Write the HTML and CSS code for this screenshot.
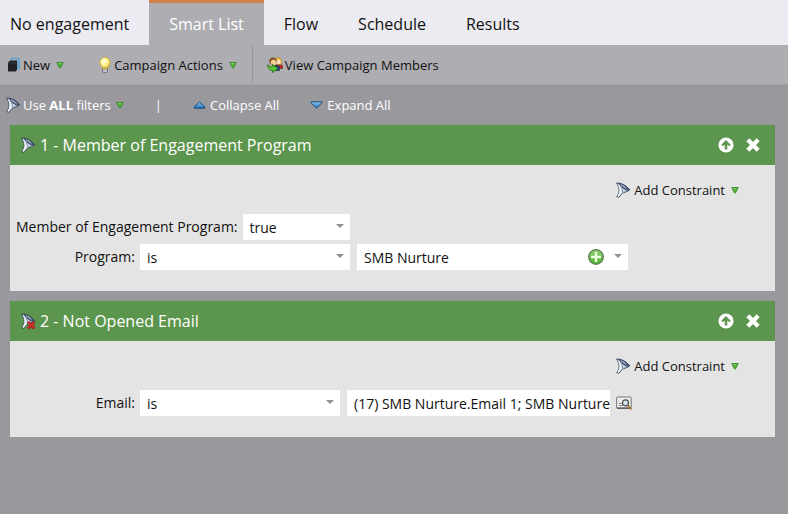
FILE: index.html
```html
<!DOCTYPE html>
<html lang="en">
<head>
    <meta charset="UTF-8">
    <meta name="viewport" content="width=device-width, initial-scale=1.0">
    <title>Smart List</title>
    <link rel="stylesheet" href="styles.css">
</head>
<body>
    <!-- shared icons -->
    <svg class="sprite" aria-hidden="true">
        <defs>
            <linearGradient id="steel" x1="0" y1="0" x2="1" y2="1">
                <stop offset="0" stop-color="#8d9cb5"/>
                <stop offset="0.5" stop-color="#dfe7f2"/>
                <stop offset="1" stop-color="#34435f"/>
            </linearGradient>
            <linearGradient id="blue" x1="0" y1="0" x2="0" y2="1">
                <stop offset="0" stop-color="#8cc8f2"/>
                <stop offset="1" stop-color="#2372b8"/>
            </linearGradient>
            <radialGradient id="glow" cx="0.4" cy="0.35" r="0.7">
                <stop offset="0" stop-color="#fffef0"/>
                <stop offset="0.5" stop-color="#fff490"/>
                <stop offset="1" stop-color="#e3bb30"/>
            </radialGradient>
            <linearGradient id="leaf" x1="0" y1="0" x2="0" y2="1">
                <stop offset="0" stop-color="#8ccb72"/>
                <stop offset="1" stop-color="#4eb32f"/>
            </linearGradient>
        </defs>
        <symbol id="funnel" viewBox="0 0 16 16">
            <path d="M1.500 1C5 .2 13 4.500 14.500 8C12.500 10 8.500 10.300 7 11.500L4 15.300L1.800 14.800L4 10.500C4.500 7.500 3.500 3.500 1.500 1Z" fill="url(#steel)" stroke="#34425a" stroke-width=".8"/>
            <path d="M4 1.500C8 1.800 13 5 14.300 8C12.500 8.500 10 7.500 8 6C6 4.500 4.500 3 4 1.500Z" fill="#5c6c88" stroke="#28364f" stroke-width=".8"/>
            <path d="M3.500 2.500C5.500 6 5.800 9 4.800 11.300L3.200 14.200" fill="none" stroke="#f6f9ff" stroke-width="1.300"/>
            <path d="M6 3C8 3.500 10 5 11 6.200" fill="none" stroke="#c2cee0"/>
            <path d="M6.500 6C7.500 7.500 8 8.500 7.500 10" fill="none" stroke="#7c8ba6"/>
        </symbol>
        <symbol id="drop" viewBox="0 0 8 8">
            <path d="M.8 1.500H7.200L4.600 6.800H3.400Z" fill="#55b636" stroke="#33852a" stroke-width=".9"/>
            <path d="M2.300 2.400H5" stroke="#96dc7c" stroke-width=".8"/>
        </symbol>
        <symbol id="up" viewBox="0 0 16 16">
            <path fill-rule="evenodd" d="M8 .4A7.600 7.600 0 1 1 8 15.600A7.600 7.600 0 1 1 8 .4ZM8 3L3.300 7.700L4.800 9.200L6.700 7.500V12.500H9.300V7.500L11.200 9.200L12.700 7.700Z" fill="#fff"/>
        </symbol>
        <symbol id="close" viewBox="0 0 14 14">
            <path d="M1.800 1.800L12.200 12.200M12.200 1.800L1.800 12.200" stroke="#fff" stroke-width="4.200"/>
        </symbol>
    </svg>

    <nav class="tabs">
        <a class="tab" href="#">No engagement</a>
        <a class="tab active" href="#" aria-current="page">Smart List</a>
        <a class="tab" href="#">Flow</a>
        <a class="tab" href="#">Schedule</a>
        <a class="tab" href="#">Results</a>
    </nav>

    <div class="toolbar">
        <div class="toolbar-group">
            <button class="tool" type="button">
                <svg class="icon-new" viewBox="0 0 13 16">
                    <path d="M4.500 3.500V1.500H12V11.500H10" fill="none" stroke="#5ca5cf" stroke-width="1.500"/>
                    <path d="M10 4L12 2V11L10 13Z" fill="#68a6c8"/>
                    <path d="M1 5.500L3 3.500H10V13L8.500 14.500H1Z" fill="#202226"/>
                    <path d="M1.500 6H8.500L9.500 4.800" fill="none" stroke="#46494f" stroke-width=".7"/>
                </svg>
                <span>New</span>
                <svg class="icon-drop"><use href="#drop"/></svg>
            </button>
            <button class="tool" type="button">
                <svg class="icon-bulb" viewBox="0 0 12 16">
                    <path d="M3.500 11H8.500V14.500L7.500 15.700H4.500L3.500 14.500Z" fill="#989ba0" stroke="#595c60" stroke-width=".6"/>
                    <path d="M6 .5A5.200 5.200 0 0 1 11.200 5.500C11.200 8 8.700 9 8.500 11.300H3.500C3.300 9 .8 8 .8 5.500A5.200 5.200 0 0 1 6 .5Z" fill="url(#glow)" stroke="#c6a126" stroke-width=".7"/>
                    <path d="M4 12.800H8M4.200 14.300H7.800" stroke="#e6e6e6" stroke-width=".8"/>
                </svg>
                <span>Campaign Actions</span>
                <svg class="icon-drop"><use href="#drop"/></svg>
            </button>
        </div>
        <button class="tool tool-members" type="button">
            <svg class="icon-members" viewBox="0 0 16 16">
                <path d="M8.500 11V8.500C9 7 15.500 7 15.500 9V11.500H10Z" fill="#b82b28" stroke="#6e1916" stroke-width=".6"/>
                <path d="M8.200 7.500C7.500 2 8.500 .6 11.200 .6S15 2.500 14.300 7.500Z" fill="#e9c34e" stroke="#977221" stroke-width=".6"/>
                <circle cx="11.500" cy="5" r="2.300" fill="#fbe2b8"/>
                <path d="M5.500 12.500V10C6 8 12 8 12.500 10V13.500H6Z" fill="#294876" stroke="#17294a" stroke-width=".6"/>
                <circle cx="6" cy="4.300" r="3.700" fill="#815326"/>
                <circle cx="6.500" cy="5.500" r="2.700" fill="#f6d09b"/>
                <path d="M.7 7.500C1.500 9.500 3 10 5.500 9.700V7.300L10.800 11.500L5.500 15.700V13.500C2 13.500 .5 11 .7 7.500Z" fill="#58c53a" stroke="#23701b" stroke-width=".8"/>
            </svg>
            <span>View Campaign Members</span>
        </button>
    </div>

    <div class="filter-bar">
        <button class="tool" type="button">
            <svg class="icon-funnel"><use href="#funnel"/></svg>
            <span>Use <b>ALL</b> filters</span>
            <svg class="icon-drop"><use href="#drop"/></svg>
        </button>
        <span class="divider">|</span>
        <button class="tool tool-tri" type="button">
            <svg class="icon-tri" viewBox="0 0 12 8"><path d="M6 .8L11.200 6V7.200H.8V6Z" fill="url(#blue)" stroke="#174b79"/></svg>
            <span>Collapse All</span>
        </button>
        <button class="tool tool-tri" type="button">
            <svg class="icon-tri" viewBox="0 0 12 8"><path d="M6 7.200L11.200 2V.8H.8V2Z" fill="url(#blue)" stroke="#174b79"/></svg>
            <span>Expand All</span>
        </button>
    </div>

    <main class="filters">
        <section class="filter">
            <header class="filter-header">
                <svg class="icon-funnel"><use href="#funnel"/></svg>
                <h2>1 - Member of Engagement Program</h2>
                <button class="head-btn" type="button" aria-label="Move up"><svg class="icon-up"><use href="#up"/></svg></button>
                <button class="head-btn" type="button" aria-label="Remove"><svg class="icon-close"><use href="#close"/></svg></button>
            </header>
            <div class="filter-body">
                <button class="tool add-constraint" type="button">
                    <svg class="icon-funnel"><use href="#funnel"/></svg>
                    <span>Add Constraint</span>
                    <svg class="icon-drop"><use href="#drop"/></svg>
                </button>
                <div class="row">
                    <label for="member">Member of Engagement Program:</label>
                    <span class="select small"><select id="member"><option>true</option><option>false</option></select></span>
                </div>
                <div class="row">
                    <label for="program-op">Program:</label>
                    <span class="select large"><select id="program-op"><option>is</option><option>is not</option></select></span>
                    <span class="combo select">
                        <input type="text" id="program" aria-label="Program" value="SMB Nurture">
                        <button class="combo-add" type="button" aria-label="Add">
                            <svg class="icon-plus" viewBox="0 0 16 16">
                                <circle cx="8" cy="8" r="7.300" fill="url(#leaf)" stroke="#5f7f57" stroke-width="1.300"/>
                                <path d="M8 3V13M3 8H13" stroke="#e9ffe0" stroke-width="2.400"/>
                            </svg>
                        </button>
                    </span>
                </div>
            </div>
        </section>

        <section class="filter">
            <header class="filter-header">
                <svg class="icon-funnel" viewBox="0 0 16 16">
                    <use href="#funnel"/>
                    <path d="M8 9L14.500 15.500M14.500 9L8 15.500" stroke="#7e1512" stroke-width="3"/>
                    <path d="M8 9L14.500 15.500M14.500 9L8 15.500" stroke="#d3302a" stroke-width="1.800"/>
                </svg>
                <h2>2 - Not Opened Email</h2>
                <button class="head-btn" type="button" aria-label="Move up"><svg class="icon-up"><use href="#up"/></svg></button>
                <button class="head-btn" type="button" aria-label="Remove"><svg class="icon-close"><use href="#close"/></svg></button>
            </header>
            <div class="filter-body">
                <button class="tool add-constraint" type="button">
                    <svg class="icon-funnel"><use href="#funnel"/></svg>
                    <span>Add Constraint</span>
                    <svg class="icon-drop"><use href="#drop"/></svg>
                </button>
                <div class="row">
                    <label for="email-op">Email:</label>
                    <span class="select medium"><select id="email-op"><option>is</option><option>is not</option></select></span>
                    <input class="email" type="text" aria-label="Email" value="(17) SMB Nurture.Email 1; SMB Nurture.Email 2">
                    <button class="lookup" type="button" aria-label="Choose emails">
                        <svg class="icon-lookup" viewBox="0 0 16 16">
                            <rect x=".6" y="2" width="14.600" height="11.500" rx="1" fill="#ececec" stroke="#777"/>
                            <path d="M1 13H15" stroke="#555" stroke-width="1.300"/>
                            <path d="M3 8.500H6M3 10.500H7" stroke="#888"/>
                            <circle cx="9.500" cy="7.800" r="3" fill="#dce8f2" stroke="#43474d" stroke-width="1.200"/>
                            <path d="M11.700 10L15.200 14.500" stroke="#9a7937" stroke-width="2"/>
                        </svg>
                    </button>
                </div>
            </div>
        </section>
    </main>
</body>
</html>
```

FILE: styles.css
```css
* {
    box-sizing: border-box;
}

body {
    font-family: "Open Sans", sans-serif;
    font-size: 13px;
    background-color: #99989d;
    color: #111;
    margin: 0;
}

button,
input,
select {
    font: inherit;
    color: inherit;
    border: none;
    border-radius: 0;
    margin: 0;
    padding: 0;
}

button {
    background: none;
    cursor: pointer;
}

svg {
    display: block;
    flex: none;
}

.sprite {
    position: absolute;
    width: 0;
    height: 0;
}

/* tabs */
.tabs {
    display: flex;
    background-color: #ebebf1;
    padding-right: 20px;
}

.tab {
    border-top: 3px solid transparent;
    padding: 0 20px;
    font-size: 16px;
    line-height: 42px;
    color: #111;
    text-decoration: none;
    white-space: nowrap;
}

.tab:first-child {
    padding-left: 10px;
}

.tab.active {
    background-color: #aeaeb2;
    border-top-color: #cf7f48;
    color: #fff;
}

/* toolbars */
.toolbar {
    display: flex;
    height: 40px;
    background-color: #aeaeb2;
    border-bottom: 1px solid #a3a3a7;
}

.toolbar-group {
    display: flex;
    gap: 35px;
    padding: 0 15px 0 7px;
    border-right: 1px solid #98989c;
}

.tool {
    display: flex;
    align-items: center;
    gap: 3px;
    white-space: nowrap;
}

.tool .icon-drop {
    margin-left: 3px;
}

.tool-members {
    gap: 2px;
    padding-left: 14px;
}

.filter-bar {
    display: flex;
    align-items: center;
    gap: 31px;
    height: 40px;
    padding-left: 5px;
    color: #fff;
}

.filter-bar .tool {
    gap: 2px;
}

.filter-bar .tool-tri {
    gap: 4px;
}

.icon-new {
    width: 13px;
    height: 16px;
}

.icon-bulb {
    width: 12px;
    height: 16px;
}

.icon-members,
.icon-funnel,
.icon-plus,
.icon-lookup,
.icon-up {
    width: 16px;
    height: 16px;
}

.icon-close {
    width: 14px;
    height: 14px;
}

.icon-drop {
    width: 8px;
    height: 8px;
}

.icon-tri {
    width: 13px;
    height: 8px;
}

/* filter cards */
.filters {
    display: flex;
    flex-direction: column;
    gap: 10px;
    padding: 0 13px 20px 10px;
}

.filter {
    background-color: #e4e4e4;
}

.filter-header {
    display: flex;
    align-items: center;
    height: 40px;
    padding: 0 15px 0 10px;
    background-color: #5c954d;
    color: #fff;
}

.filter-header h2 {
    flex: 1;
    margin: 0 0 0 4px;
    font-size: 16px;
    font-weight: 400;
}

.head-btn {
    margin-left: 12px;
}

.filter-body {
    padding: 12px 7px 21px 6px;
}

.add-constraint {
    height: 26px;
    margin: 0 29px 11px auto;
}

.row {
    display: flex;
    align-items: center;
    height: 26px;
    font-size: 14px;
}

.row + .row {
    margin-top: 4px;
}

.row label {
    min-width: 119px;
    margin-right: 5px;
    padding-bottom: 2px;
    text-align: right;
    white-space: nowrap;
}

.select {
    position: relative;
    height: 26px;
    background-color: #fff;
}

.select::after {
    content: "";
    position: absolute;
    top: 10px;
    right: 6px;
    border: 4px solid transparent;
    border-top: 4px solid #929292;
    border-bottom: none;
    pointer-events: none;
}

.select select {
    appearance: none;
    width: 100%;
    height: 26px;
    padding: 1px 20px 0 7px;
    background: none;
}

.small {
    width: 107px;
}

.medium {
    width: 200px;
}

.large {
    width: 210px;
}

.combo {
    display: flex;
    align-items: center;
    width: 271px;
    margin-left: 7px;
    padding-right: 24px;
}

.combo input {
    flex: 1;
    min-width: 0;
    height: 26px;
    padding: 1px 0 0 7px;
    background: none;
}

.email {
    width: 263px;
    height: 26px;
    margin-left: 7px;
    padding: 1px 0 0 7px;
    background-color: #fff;
}

.lookup {
    margin-left: 6px;
}
```
